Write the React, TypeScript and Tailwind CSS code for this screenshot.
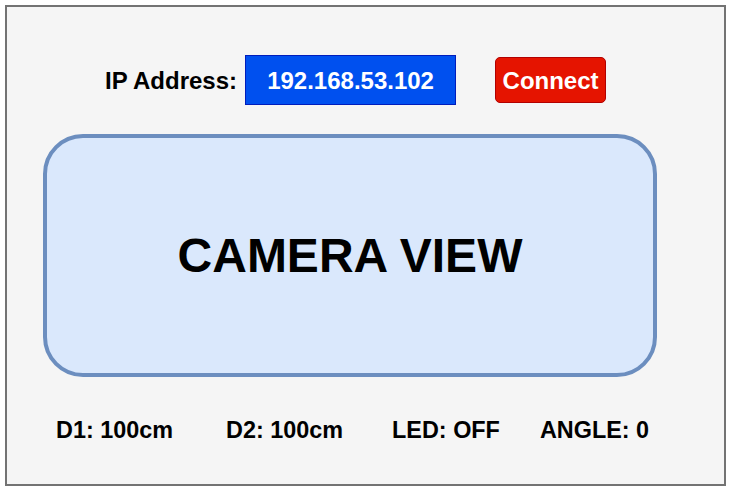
const stats = [
  { label: "D1: 100cm", ml: "ml-[49px]" },
  { label: "D2: 100cm", ml: "ml-[53px]" },
  { label: "LED: OFF", ml: "ml-[49px]" },
  { label: "ANGLE: 0", ml: "ml-[40px]" },
];

export default function App() {
  return (
    <div className="w-[731px] h-[491px] bg-white pt-[5px] pl-[5px] font-['Liberation_Sans',Arial,sans-serif] font-bold text-black">
      <div className="w-[721px] h-[481px] border-2 border-[#737373] bg-[#f5f5f5]">
        {/* Connection row */}
        <div className="flex items-center pt-[48px] pl-[98px] text-[24px] leading-[23px]">
          <span>IP Address:</span>
          <div className="ml-[8px] flex h-[50px] w-[211px] items-center justify-center border border-[#001dbc] bg-[#0050ef] text-white">
            192.168.53.102
          </div>
          <button className="ml-[39px] flex h-[46px] w-[111px] items-center justify-center rounded-[5px] border border-[#b20000] bg-[#e51400] text-white text-[24px]">
            Connect
          </button>
        </div>

        {/* Camera view */}
        <div className="ml-[36px] mt-[29px] flex h-[243px] w-[614px] items-center justify-center rounded-[40px] border-4 border-[#6c8ebf] bg-[#dae8fc]">
          <span className="text-[48px] leading-none">CAMERA VIEW</span>
        </div>

        {/* Status row */}
        <div className="mt-[42px] flex text-[23.4px] leading-[23px]">
          {stats.map((s) => (
            <span key={s.label} className={s.ml}>
              {s.label}
            </span>
          ))}
        </div>
      </div>
    </div>
  );
}
